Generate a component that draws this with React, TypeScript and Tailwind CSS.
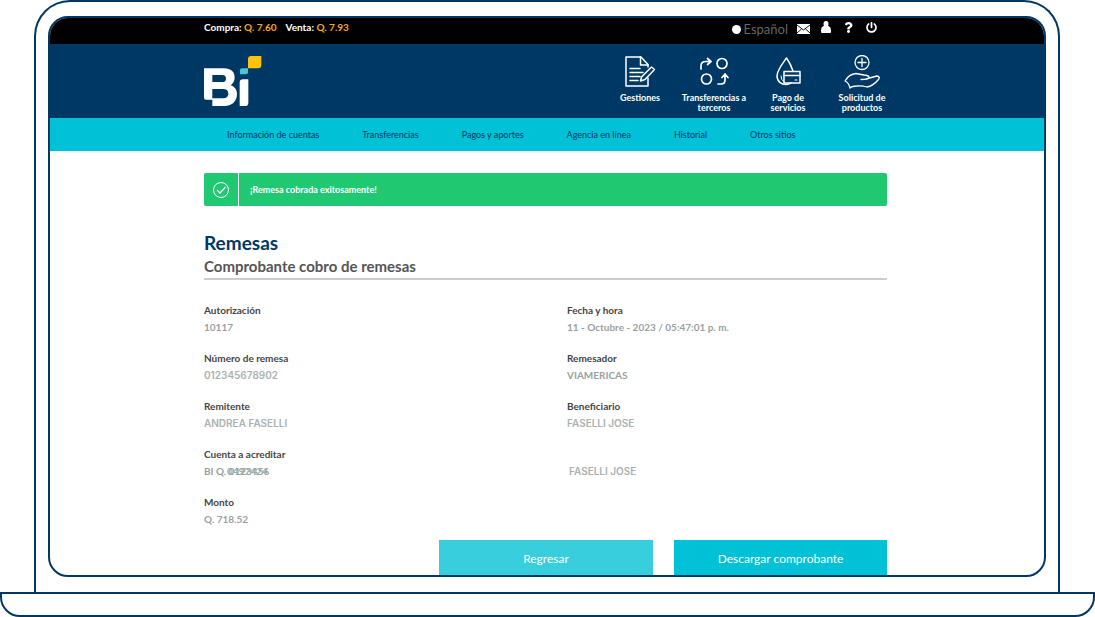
import React from 'react';
import { FaPowerOff, FaQuestion } from 'react-icons/fa';

const navItems = [
  'Información de cuentas',
  'Transferencias',
  'Pagos y aportes',
  'Agencia en línea',
  'Historial',
  'Otros sitios',
];

interface FieldProps {
  label?: string;
  children?: React.ReactNode;
}

function Field({ label, children }: FieldProps) {
  return (
    <div className="flex h-12 flex-col">
      <dt className="h-4 text-[10px] leading-4 font-bold text-[#454545]">{label}</dt>
      <dd className="relative text-[10px] leading-[18px] font-bold text-[#9b9f9f]">{children}</dd>
    </div>
  );
}

function Logo() {
  return (
    <svg width="58" height="51" viewBox="0 0 174 153" aria-label="Bi">
      <path
        fill="#fff"
        fillRule="evenodd"
        d="M0 37H60C81 37 92 48 92 64C92 76 87 83 80 88C92 92 99 101 99 114C99 135 85 150 62 150H25V131H6Q0 131 0 125ZM25 57V78H55C62 78 66 75 66 68C66 60 62 57 55 57ZM25 99V127H58C68 127 73 121 73 113C73 105 68 99 58 99Z"
      />
      <path fill="#fff" d="M107 80Q107 70 117 70H133V140Q133 150 123 150H107Z" />
      <path fill="#4dc3d8" d="M108 43Q108 37 114 37H132V49Q132 55 126 55H108Z" />
      <path fill="#ffc20e" d="M132 10Q132 0 142 0H172V27Q172 37 162 37H132Z" />
    </svg>
  );
}

function DocumentIcon() {
  return (
    <svg width="32" height="32" viewBox="0 0 32 32" fill="none" stroke="#fff" strokeWidth="1.5" strokeLinejoin="round" strokeLinecap="round">
      <path d="M24 11V8.5L17 1H2V30H24V22" />
      <path d="M16.5 1V9H24" />
      <path d="M6 12.5H16M6 16.5H19M6 20.5H16M6 24.5H14" />
      <path d="M17.5 21L27.5 11L30.5 13.5L21 23.5L16.5 25Z" />
    </svg>
  );
}

function TransferIcon() {
  return (
    <svg width="32" height="32" viewBox="0 0 32 32" fill="none" stroke="#fff" strokeWidth="1.7" strokeLinejoin="round" strokeLinecap="round">
      <circle cx="24" cy="7.5" r="5" />
      <circle cx="8.5" cy="23" r="5" />
      <path d="M3 13V10Q3 5.5 8 5.5H13M9.5 2.5L13 5.5L9.5 8.5" />
      <path d="M20 28H23Q27 28 27 24V18.5M24 21.5L27 18L30 21.5" />
    </svg>
  );
}

function ServicesIcon() {
  return (
    <svg width="32" height="32" viewBox="0 0 32 32" fill="none" stroke="#fff" strokeWidth="1.5" strokeLinejoin="round" strokeLinecap="round">
      <path d="M21 15C19.500 10.500 17 5.500 14.500 2C11 7 5 14 5 20C5 25.500 9.500 28.500 14 28.500Q17 28.500 19 27" />
      <path d="M9 20Q9 24 11.500 25.500" strokeWidth="1" />
      <rect x="12" y="15.500" width="16" height="11.500" />
      <path d="M12 19.500H28" />
      <path d="M23 24H25" strokeWidth="1" />
    </svg>
  );
}

function ProductsIcon() {
  return (
    <svg width="36" height="34" viewBox="0 0 36 34" fill="none" stroke="#fff" strokeWidth="1.3" strokeLinejoin="round" strokeLinecap="round">
      <circle cx="18" cy="7.5" r="7" />
      <path d="M18 3.5V11.5M14 7.5H22" />
      <path d="M6 33Q5 28 1 26Q5 19 12 18.5L20 20Q24 20 25.5 22.5Q24 24.5 17 24.5M25.5 23L33 21Q37 22 34 25Q29 31 23 32Q18 30.5 13 31Q8 31 6 33" />
    </svg>
  );
}

const actions = [
  { label: 'Gestiones', icon: <DocumentIcon /> },
  { label: 'Transferencias a terceros', icon: <TransferIcon /> },
  { label: 'Pago de servicios', icon: <ServicesIcon /> },
  { label: 'Solicitud de productos', icon: <ProductsIcon /> },
];

function TopBar() {
  return (
    <div className="flex h-[26px] items-center justify-between bg-black pr-[167px] pb-2 pl-[154px] text-[10px] font-bold text-white">
      <div className="flex gap-[9px]">
        <span>
          Compra: <span className="text-[#f5a81c]">Q. 7.60</span>
        </span>
        <span>
          Venta: <span className="text-[#f5a81c]">Q. 7.93</span>
        </span>
      </div>
      <div className="flex items-center">
        <button className="mr-[9px] flex items-center gap-[3px] pt-1 text-[13px] leading-4 font-normal text-[#666]">
          <span className="size-[9px] rounded-full bg-white" />
          Español
        </button>
        <button aria-label="Mensajes" className="mr-[11px] pt-1">
          <svg width="13" height="10" viewBox="0 0 13 10">
            <rect width="13" height="10" fill="#fff" />
            <path d="M0 1L6.500 6L13 1M0 9L4.500 5M13 9L8.500 5" fill="none" stroke="#111" />
          </svg>
        </button>
        <button aria-label="Perfil" className="mr-3">
          <svg width="10" height="12" viewBox="0 0 10 12" fill="#fff">
            <ellipse cx="5" cy="3" rx="2.500" ry="3" />
            <path d="M2.500 5H7.500Q10 6 10 9V11Q10 12 9 12H1Q0 12 0 11V9Q0 6 2.500 5Z" />
          </svg>
        </button>
        <button aria-label="Ayuda" className="mr-3">
          <FaQuestion size={11} />
        </button>
        <button aria-label="Salir">
          <FaPowerOff size={11} />
        </button>
      </div>
    </div>
  );
}

export default function App() {
  return (
    <div className="bg-white font-['Lato',sans-serif]">
      <div className="mr-[35px] ml-[34px] rounded-t-[36px] border-2 border-b-0 border-[#003865] px-3 pt-[14px] pb-[15px]">
        <div className="overflow-hidden rounded-[20px] border-2 border-[#003865] bg-white">
          <TopBar />

          <header className="flex h-[74px] items-start justify-between bg-[#003865] pr-[145px] pl-[154px]">
            <a href="#" aria-label="Inicio" className="pt-3">
              <Logo />
            </a>
            <div className="flex pt-[11px]">
              {actions.map((action) => (
                <a
                  key={action.label}
                  href="#"
                  className="flex w-[74px] flex-col items-center gap-1 text-center text-[9px] leading-[10px] font-bold text-white"
                >
                  <span className="flex h-[34px] items-center">{action.icon}</span>
                  <span className="px-1">{action.label}</span>
                </a>
              ))}
            </div>
          </header>

          <nav className="flex h-[33px] items-center gap-[43px] bg-[#00c1d5] pl-[177px] text-[9px] text-[#003865]">
            {navItems.map((item) => (
              <a key={item} href="#" className="whitespace-nowrap">
                {item}
              </a>
            ))}
          </nav>

          <main className="pt-[22px] pr-[157px] pl-[154px]">
            <div role="status" className="flex h-[33px] items-stretch rounded-xs bg-[#21c872] text-white">
              <div className="flex w-[35px] items-center justify-center border-r border-white">
                <svg width="18" height="18" viewBox="0 0 18 18" fill="none" stroke="#fff" strokeWidth="1">
                  <circle cx="9" cy="9" r="7.5" />
                  <path d="M5 9L8 12L13.5 6" strokeWidth="1.3" />
                </svg>
              </div>
              <p className="flex items-center pl-[11px] text-[9px] font-bold">¡Remesa cobrada exitosamente!</p>
            </div>

            <h1 className="mt-[25px] text-[19px] leading-6 font-bold text-[#003865]">Remesas</h1>
            <h2 className="border-b-2 border-[#ccc] pb-px text-[15px] leading-[22px] font-bold text-[#555]">
              Comprobante cobro de remesas
            </h2>

            <div className="mt-[22px] flex h-[238px]">
              <dl className="w-[363px]">
                <Field label="Autorización">10117</Field>
                <Field label="Número de remesa">
                  <span className="font-['Inter',sans-serif] font-semibold text-[#a9b2b0]">012345678902</span>
                </Field>
                <Field label="Remitente">
                  <span className="font-['Inter',sans-serif] font-semibold text-[#a9b2b0]">ANDREA FASELLI</span>
                </Field>
                <Field label="Cuenta a acreditar">
                  <span>BI Q. 0123456</span>
                  <span className="absolute top-0 left-[23px] text-[#a3adab]">0497424</span>
                </Field>
                <Field label="Monto">Q. 718.52</Field>
              </dl>
              <dl className="flex-1">
                <Field label="Fecha y hora">11 - Octubre - 2023 / 05:47:01 p. m.</Field>
                <Field label="Remesador">VIAMERICAS</Field>
                <Field label="Beneficiario">
                  <span className="font-['Inter',sans-serif] font-semibold text-[#a9b2b0]">FASELLI JOSE</span>
                </Field>
                <Field>
                  <span className="pl-[2px] font-['Inter',sans-serif] font-semibold text-[#a9b2b0]">FASELLI JOSE</span>
                </Field>
              </dl>
            </div>

            <div className="flex justify-end gap-[21px] text-[12px] text-white">
              <button className="w-[214px] bg-[#38cedd] pt-[11px] pb-2 leading-4">Regresar</button>
              <button className="w-[213px] bg-[#00c1d5] pt-[11px] pb-2 leading-4">Descargar comprobante</button>
            </div>
          </main>
        </div>
      </div>
      <div className="h-[25px] rounded-b-[20px] border-2 border-[#003865]" />
    </div>
  );
}
